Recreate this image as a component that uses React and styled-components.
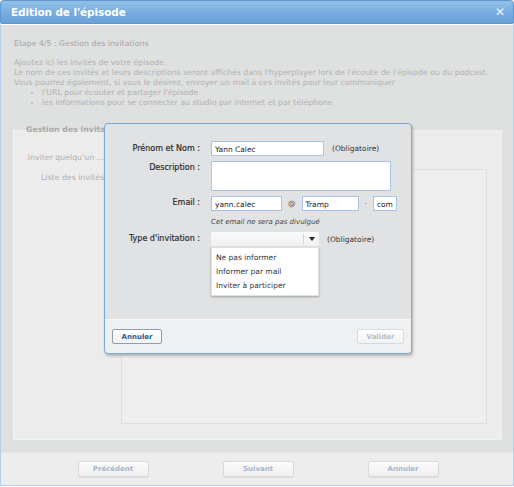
import { styled, createGlobalStyle } from "styled-components";

const Global = createGlobalStyle`
  html, body {
    margin: 0;
    padding: 0;
    background: #ffffff;
  }
  body {
    font-family: "DejaVu Sans", Verdana, sans-serif;
  }
`;

const Window = styled.div`
  width: 512px;
  height: 485px;
  border: 1px solid #b7d0ea;
  border-top: none;
  border-radius: 4px 4px 0 0;
  display: flex;
  flex-direction: column;
  position: relative;
  background: #dfe0e0;
`;

const TitleBar = styled.div`
  height: 22px;
  margin: 0 -1px;
  border: 1px solid #5f97cf;
  border-radius: 4px 4px 2px 2px;
  background: linear-gradient(#92bfe6, #78ace0 55%, #6aa1d8);
  display: flex;
  align-items: center;
  justify-content: space-between;
  padding: 0 8px 0 10px;
  color: #fff;
  box-shadow: 0 1px 0 #ffffff;
`;

const Title = styled.span`
  font-weight: bold;
  font-size: 10.5px;
  letter-spacing: -0.1px;
`;

const Close = styled.span`
  font-weight: bold;
  font-size: 12px;
  color: #eef5fc;
`;

const Body = styled.div`
  flex: 1;
  padding: 15px 11px 12px 12px;
  display: flex;
  flex-direction: column;
  color: #b2b2b2;
  font-size: 7.8px;
  line-height: 10px;
`;

const Step = styled.p`
  margin: 0 0 9px 1px;
  color: #a4a4a4;
`;

const Para = styled.p`
  margin: 0 0 0 1px;
`;

const Bullets = styled.ul`
  margin: 0;
  padding-left: 29px;
  list-style: disc;
`;

const Fieldset = styled.fieldset`
  margin: 17px 0 0 0;
  padding: 0;
  border: 1px solid #f2f2f2;
  background: #ececec;
  flex: 1;
  min-width: 0;
  display: flex;
  flex-direction: column;
`;

const Legend = styled.legend`
  margin-left: 8px;
  padding: 0 4px;
  font-weight: bold;
  color: #a9a9a9;
`;

const FieldGrid = styled.div`
  flex: 1;
  display: grid;
  grid-template-columns: 90px 1fr;
  grid-template-rows: 12px 1fr;
  column-gap: 17px;
  row-gap: 5px;
  padding: 17px 14px 15px 0;
`;

const SideLabel = styled.div`
  text-align: right;
  color: #b0b0b0;
  line-height: 12px;
  padding-top: ${(p) => p.$top || 0}px;
`;

const ListBox = styled.div`
  border: 1px solid #dedede;
  background: #eeeeee;
`;

const Footer = styled.div`
  height: 32px;
  background: #ededed;
  border-top: 1px solid #e6e6e6;
  display: flex;
  align-items: center;
  justify-content: center;
  gap: 74px;
  padding-left: 2px;
`;

const FooterButton = styled.button`
  width: 71px;
  height: 16px;
  padding: 0;
  border: 1px solid #d6dadf;
  border-radius: 2px;
  background: linear-gradient(#fbfbfb, #efefef);
  color: #a6b6cc;
  font-family: "DejaVu Sans", sans-serif;
  font-weight: bold;
  font-size: 7px;
  box-shadow: 0 1px 1px rgba(0, 0, 0, 0.06);
`;

const Modal = styled.div`
  position: absolute;
  left: 103px;
  top: 123px;
  width: 306px;
  height: 229px;
  border: 1px solid #79a9d9;
  border-radius: 4px;
  background: #e1e2e3;
  box-shadow: 1px 2px 3px rgba(0, 0, 0, 0.25);
  display: flex;
  flex-direction: column;
  color: #333;
  font-size: 7.5px;
`;

const ModalBody = styled.div`
  flex: 1;
  padding: 17px 0 0 0;
  display: grid;
  grid-template-columns: 95px auto;
  column-gap: 11px;
  row-gap: 5px;
  align-content: start;
`;

const Label = styled.div`
  text-align: right;
  padding-top: ${(p) => p.$top ?? 3}px;
  color: #2e2e2e;
  font-size: 8px;
  -webkit-text-stroke: 0.2px #2e2e2e;
`;

const Field = styled.div`
  display: flex;
  align-items: center;
  gap: 8px;
  position: relative;
  margin-bottom: ${(p) => p.$mb || 0}px;
`;

const Input = styled.div`
  box-sizing: border-box;
  width: ${(p) => p.$w}px;
  height: ${(p) => p.$h || 15}px;
  border: 1px solid #a8c4e2;
  background: #fff;
  padding: 3px 0 0 3px;
  color: #222;
  font-size: 7.5px;
  line-height: 9px;
`;

const Sep = styled.span`
  color: #555;
  margin: 0 -2px;
`;

const Note = styled.span`
  color: #444;
  font-style: italic;
  font-size: 7px;
  padding-top: 2px;
`;

const Hint = styled.span`
  color: #333;
`;

const Select = styled.div`
  box-sizing: border-box;
  width: 108px;
  height: 14px;
  border-radius: 2px;
  background: linear-gradient(#fafafa, #f0f0f0);
  display: flex;
  justify-content: flex-end;
`;

const Arrow = styled.div`
  width: 15px;
  border-left: 1px solid #d4d4d4;
  margin: 2px 0;
  display: flex;
  align-items: center;
  justify-content: center;
  &::after {
    content: "";
    border-left: 3px solid transparent;
    border-right: 3px solid transparent;
    border-top: 4px solid #222;
  }
`;

const Menu = styled.ul`
  position: absolute;
  left: 0;
  top: 15px;
  width: 108px;
  margin: 0;
  padding: 3px 0 2px;
  list-style: none;
  background: #fff;
  border: 1px solid #e0e0e0;
  box-sizing: border-box;
  box-shadow: 0 1px 2px rgba(0, 0, 0, 0.3);
`;

const MenuItem = styled.li`
  padding: 0 0 0 4px;
  height: 14px;
  line-height: 14px;
  color: #333;
`;

const ModalFooter = styled.div`
  height: 33px;
  background: #eff0f1;
  border-top: 1px solid #f6f6f6;
  border-radius: 0 0 4px 4px;
  display: flex;
  align-items: center;
  justify-content: space-between;
  padding: 0 7px;
`;

const ModalButton = styled.button`
  width: ${(p) => p.$w}px;
  height: 15px;
  padding: 0;
  border: 1px solid ${(p) => (p.$disabled ? "#d8dadc" : "#8e9db0")};
  border-radius: 2px;
  background: linear-gradient(#ffffff, #f1f2f3);
  color: ${(p) => (p.$disabled ? "#b9bcbf" : "#2d5a88")};
  font-family: "DejaVu Sans", sans-serif;
  font-weight: bold;
  font-size: 7px;
`;

export default function App() {
  return (
    <>
      <Global />
      <Window>
        <TitleBar>
          <Title>Edition de l'épisode</Title>
          <Close>✕</Close>
        </TitleBar>
        <Body>
          <Step>Etape 4/5 : Gestion des invitations</Step>
          <Para>Ajoutez ici les invités de votre épisode.</Para>
          <Para>
            Le nom de ces invités et leurs descriptions seront affichés dans l'hyperplayer lors de l'écoute de l'épisode ou du podcast.
          </Para>
          <Para>
            Vous pourrez également, si vous le désirez, envoyer un mail à ces invités pour leur communiquer
          </Para>
          <Bullets>
            <li>l'URL pour écouter et partager l'épisode</li>
            <li>les informations pour se connecter au studio par internet et par téléphone</li>
          </Bullets>
          <Fieldset>
            <Legend>Gestion des invitations</Legend>
            <FieldGrid>
              <SideLabel>Inviter quelqu'un ...</SideLabel>
              <div />
              <SideLabel $top={3}>Liste des invités</SideLabel>
              <ListBox />
            </FieldGrid>
          </Fieldset>
        </Body>
        <Footer>
          <FooterButton>Précédent</FooterButton>
          <FooterButton>Suivant</FooterButton>
          <FooterButton>Annuler</FooterButton>
        </Footer>

        <Modal>
          <ModalBody>
            <Label>Prénom et Nom :</Label>
            <Field>
              <Input $w={113}>Yann Calec</Input>
              <Hint>(Obligatoire)</Hint>
            </Field>
            <Label $top={2}>Description :</Label>
            <Field>
              <Input $w={180} $h={30} />
            </Field>
            <Label $top={2}>Email :</Label>
            <Field>
              <Input $w={71}>yann.calec</Input>
              <Sep>@</Sep>
              <Input $w={57}>Tramp</Input>
              <Sep>·</Sep>
              <Input $w={24}>com</Input>
            </Field>
            <div />
            <Field $mb={1}>
              <Note>Cet email ne sera pas divulgué</Note>
            </Field>
            <Label $top={2}>Type d'invitation :</Label>
            <Field>
              <Select>
                <Arrow />
              </Select>
              <Hint>(Obligatoire)</Hint>
              <Menu>
                <MenuItem>Ne pas informer</MenuItem>
                <MenuItem>Informer par mail</MenuItem>
                <MenuItem>Inviter à participer</MenuItem>
              </Menu>
            </Field>
          </ModalBody>
          <ModalFooter>
            <ModalButton $w={50}>Annuler</ModalButton>
            <ModalButton $w={47} $disabled>Valider</ModalButton>
          </ModalFooter>
        </Modal>
      </Window>
    </>
  );
}
